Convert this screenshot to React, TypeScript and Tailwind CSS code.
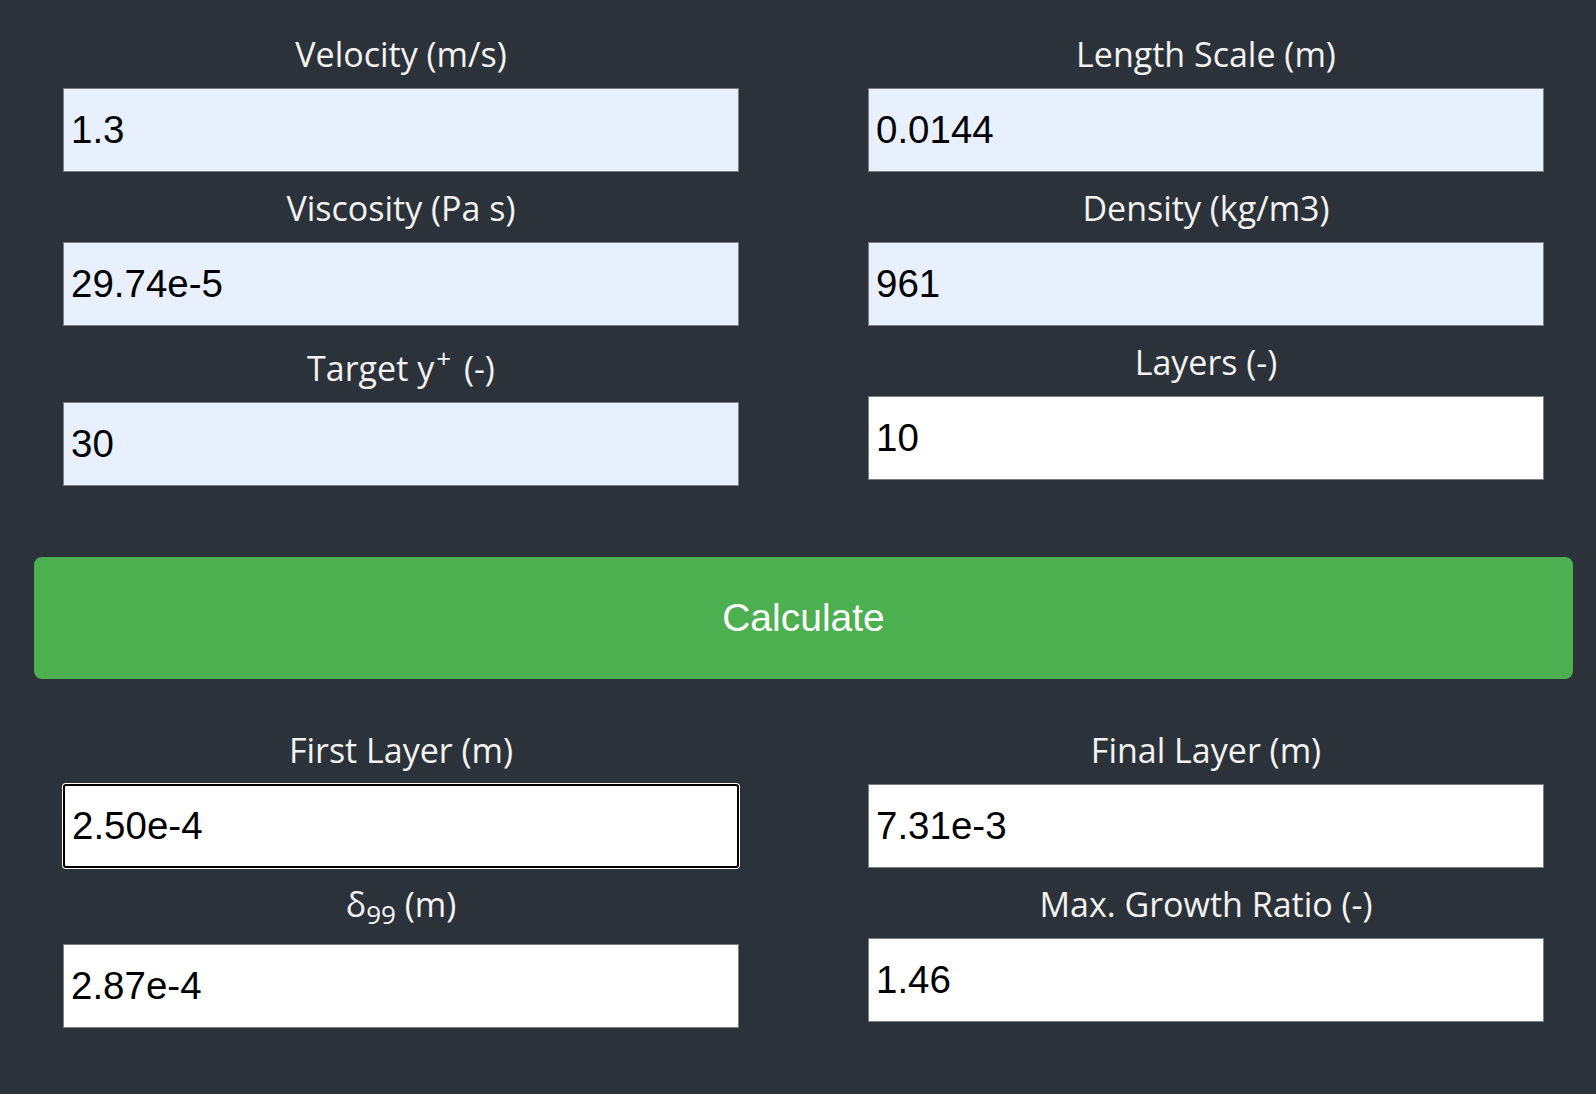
import { ReactNode } from 'react'

type FieldProps = {
  label: ReactNode
  value: string
  filled?: boolean
  focused?: boolean
  tall?: 'sup' | 'sub'
}

// one label + input pair
const Field = ({ label, value, filled, focused, tall }: FieldProps) => {
  const labelCls =
    tall === 'sup'
      ? 'mt-[19px] mb-[11px]'
      : tall === 'sub'
        ? 'mt-[13px] mb-[17px]'
        : 'mt-[13px] mb-[11px]'

  let inputCls = 'border border-[#7b7e82] bg-white'
  if (filled) inputCls = 'border border-[#7b7e82] bg-[#e8f0fe]'
  if (focused) inputCls = 'border-2 border-black rounded-[3px] bg-white shadow-[0_0_0_1px_#ffffff]'

  return (
    <div className="flex flex-col">
      <label
        className={`${labelCls} h-[46px] text-center text-[34px] leading-[46px] text-[#f3f3f3]`}
        style={{ fontFamily: '"Open Sans", sans-serif' }}
      >
        {label}
      </label>
      <input
        type="text"
        defaultValue={value}
        className={`${inputCls} box-border h-[84px] w-full px-[7px] text-[38.5px] text-black outline-none`}
        style={{ fontFamily: '"Liberation Sans", Arial, sans-serif' }}
      />
    </div>
  )
}

const App = () => {
  return (
    <div className="min-h-[1094px] w-full bg-[#2c3239] pt-[18px]">
      <div className="ml-[34px] w-[1539px]">
        {/* inputs */}
        <div className="grid grid-cols-2 items-start gap-x-[129px] px-[29px]">
          <div className="flex flex-col">
            <Field label="Velocity (m/s)" value="1.3" filled />
            <Field label="Viscosity (Pa s)" value="29.74e-5" filled />
            <Field
              label={
                <>
                  Target y<sup className="mr-[4px] ml-[2px] text-[26px]">+</sup> (-)
                </>
              }
              value="30"
              filled
              tall="sup"
            />
          </div>
          <div className="flex flex-col">
            <Field label="Length Scale (m)" value="0.0144" filled />
            <Field label="Density (kg/m3)" value="961" filled />
            <Field label="Layers (-)" value="10" />
          </div>
        </div>

        <button
          className="mt-[71px] mb-[35px] flex h-[122px] w-full items-center justify-center rounded-[8px] bg-[#4caf50] text-[39px] text-white"
          style={{ fontFamily: '"Liberation Sans", Arial, sans-serif' }}
        >
          Calculate
        </button>

        {/* results */}
        <div className="grid grid-cols-2 items-start gap-x-[129px] px-[29px]">
          <div className="flex flex-col">
            <Field label="First Layer (m)" value="2.50e-4" focused />
            <Field
              label={
                <>
                  δ<sub className="text-[26px]">99</sub> (m)
                </>
              }
              value="2.87e-4"
              tall="sub"
            />
          </div>
          <div className="flex flex-col">
            <Field label="Final Layer (m)" value="7.31e-3" />
            <Field label="Max. Growth Ratio (-)" value="1.46" />
          </div>
        </div>
      </div>
    </div>
  )
}

export default App
